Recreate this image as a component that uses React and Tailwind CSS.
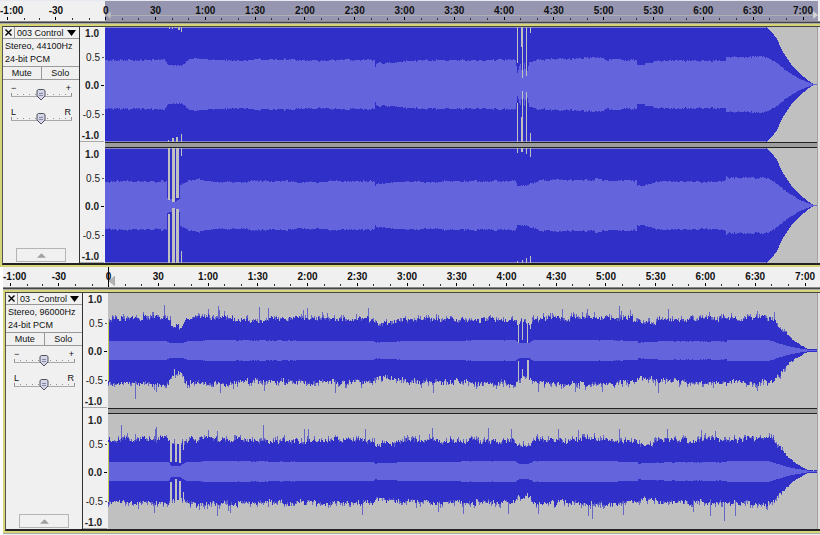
import React, { useState } from "react";

const LABELS = [
  "-30", "0", "30", "1:00", "1:30", "2:00", "2:30", "3:00",
  "3:30", "4:00", "4:30", "5:00", "5:30", "6:00", "6:30",
];

// channel drawing area, amplitude 1.0 is 57 units from the middle
const H = 115;
const MID = 57.5;

const random = (seed) => {
  let s = seed;
  return () => {
    s = (s * 16807) % 2147483647;
    return s / 2147483647;
  };
};

const envelope = (points, x) => {
  for (let i = 1; i < points.length; i++) {
    const [x0, a0] = points[i - 1];
    const [x1, a1] = points[i];
    if (x <= x1) return a0 + ((a1 - a0) * (x - x0)) / (x1 - x0);
  }
  return points[points.length - 1][1];
};

// one column per unit, closed shape above and below the middle line
const area = (top, bottom) => {
  let d = `M0 ${MID}`;
  top.forEach((a, x) => {
    d += `V${Math.round(MID - a * 57 - 0.5)}H${x + 1}`;
  });
  for (let x = bottom.length - 1; x >= 0; x--) {
    d += `V${Math.round(MID + bottom[x] * 57 + 0.5)}H${x}`;
  }
  return d + "Z";
};

// a slow wobble held for a few columns plus a fast one
const noisy = (points, width, amount, next) => {
  let slow = 0;
  let left = 0;
  return Array.from({ length: width }, (_, x) => {
    if (left-- <= 0) {
      slow = next() - 0.5;
      left = 1 + Math.floor(next() * 4);
    }
    const a = envelope(points, x);
    const n = slow * 0.6 + (next() - 0.5) * 0.6;
    return Math.max(0, a + n * amount * Math.min(1, a * 2));
  });
};

const spiky = (values, spikes, next) => {
  const out = values.map((a) => {
    const r = next();
    if (a < 0.3) return a;
    if (r > 0.95) return a + 0.05 + next() * 0.05;
    return r > 0.5 ? a + next() * 0.06 : a;
  });
  spikes.forEach(([x, a]) => {
    out[x] = a;
  });
  return out;
};

const LOUD_PEAK = [
  [0, 1], [661, 1], [666, 0.92], [671, 0.8], [678, 0.55], [685, 0.36],
  [695, 0.17], [703, 0.06], [708, 0], [712, 0],
];

const LOUD_RMS_TAIL = [
  [662, 0.48], [670, 0.39], [678, 0.28], [685, 0.19], [695, 0.08], [708, 0], [712, 0],
];

const QUIET_TAIL = [
  [527, 0.54], [533, 0.46], [545, 0.47], [552, 0.53], [600, 0.54],
  [662, 0.56], [666, 0.53], [675, 0.35], [682, 0.23], [689, 0.13], [698, 0.04], [702, 0.01], [710, 0.01],
];

const QUIET_RMS_TAIL = [
  [374, 0.17], [408, 0.17], [412, 0.12], [422, 0.13], [426, 0.17], [500, 0.17],
  [530, 0.16], [531, 0.13], [546, 0.14], [550, 0.15], [619, 0.15], [620, 0.17],
  [662, 0.17], [680, 0.07], [698, 0.01], [710, 0],
];

const TRACKS = [
  {
    name: "003 Control",
    rate: "Stereo, 44100Hz",
    width: 712,
    channels: [
      {
        seed: 17,
        peak: LOUD_PEAK,
        rms: [
          [0, 0.42], [60, 0.42], [63, 0.34], [76, 0.33], [83, 0.44], [95, 0.45],
          [110, 0.42], [135, 0.4], [148, 0.43], [185, 0.43], [195, 0.4], [235, 0.42],
          [269, 0.42], [270, 0.28], [271, 0.36], [285, 0.38], [305, 0.41], [410, 0.42],
          [412, 0.2], [415, 0.36], [417, 0.1], [419, 0.36], [421, 0.15], [424, 0.38],
          [435, 0.43], [495, 0.46], [499, 0.43], [531, 0.42], [532, 0.33], [548, 0.38],
          [550, 0.41], [620, 0.4], [621, 0.47], ...LOUD_RMS_TAIL,
        ],
        // x, width, y, height
        gaps: [
          [412, 1, 0, 36], [412, 1, 76, 39], [416, 1, 0, 20], [417, 1, 0, 51],
          [416, 1, 90, 25], [417, 1, 64, 51],
          [421, 1, 0, 49], [421, 1, 65, 50], [425, 1, 0, 6], [425, 1, 106, 9],
          [64, 1, 0, 2], [67, 1, 0, 2], [70, 2, 0, 1], [73, 2, 0, 3], [76, 1, 0, 5],
          [63, 1, 113, 2], [67, 2, 111, 4], [71, 2, 110, 5], [76, 1, 107, 8],
        ],
      },
      {
        seed: 91,
        peak: LOUD_PEAK,
        rms: [
          [0, 0.41], [61, 0.41], [62, 0.12], [66, 0.1], [70, 0.06], [74, 0.1],
          [75, 0.34], [82, 0.42], [95, 0.45], [110, 0.41], [135, 0.39], [148, 0.42],
          [185, 0.42], [195, 0.39], [235, 0.42], [269, 0.42], [270, 0.33], [271, 0.37],
          [305, 0.41], [410, 0.42], [412, 0.32], [424, 0.37], [435, 0.43], [495, 0.45],
          [499, 0.43], [531, 0.43], [532, 0.33], [548, 0.38], [550, 0.41], [620, 0.41],
          [621, 0.48], ...LOUD_RMS_TAIL,
        ],
        gaps: [
          [63, 2, 0, 52], [67, 3, 0, 54], [71, 3, 0, 50], [76, 1, 0, 8],
          [63, 2, 66, 49], [67, 3, 60, 55], [71, 3, 61, 54], [76, 1, 103, 12],
          [412, 1, 0, 5], [416, 2, 0, 4], [421, 1, 0, 6], [425, 1, 0, 9],
          [412, 1, 113, 2], [417, 1, 112, 3], [421, 1, 110, 5], [425, 1, 108, 7],
        ],
      },
    ],
  },
  {
    name: "03 - Control",
    rate: "Stereo, 96000Hz",
    width: 710,
    quiet: true,
    channels: [
      {
        seed: 233,
        peak: [
          [0, 0.56], [59, 0.58], [64, 0.42], [72, 0.4], [80, 0.56], [100, 0.57],
          [125, 0.56], [140, 0.52], [185, 0.55], [265, 0.54], [267, 0.46], [285, 0.48], [300, 0.53],
          [408, 0.55], [411, 0.48], [422, 0.48], [426, 0.54], [495, 0.58], ...QUIET_TAIL,
        ],
        spikesTop: [
          [56, 0.79], [100, 0.72], [110, 0.78], [111, 0.7], [151, 0.76], [160, 0.73], [195, 0.71],
          [199, 0.74], [260, 0.73], [455, 0.72], [480, 0.72], [512, 0.77], [523, 0.71],
          [561, 0.72], [602, 0.66], [650, 0.68], [667, 0.66],
        ],
        spikesBottom: [
          [27, 0.84], [48, 0.72], [112, 0.74], [156, 0.71], [227, 0.73], [325, 0.73],
          [431, 0.72], [468, 0.72], [495, 0.72], [551, 0.74], [650, 0.71],
        ],
        rms: [
          [0, 0.16], [58, 0.16], [62, 0.12], [74, 0.12], [80, 0.16], [100, 0.17],
          [265, 0.16], [267, 0.13], [290, 0.15], ...QUIET_RMS_TAIL,
        ],
        gaps: [
          [411, 1, 0, 50], [415, 1, 0, 47], [420, 1, 0, 50], [423, 1, 0, 36],
          [411, 1, 68, 47], [415, 1, 76, 39], [420, 2, 67, 48], [423, 1, 85, 30],
          [62, 2, 86, 29], [66, 1, 76, 39], [70, 1, 78, 37], [72, 1, 80, 35],
        ],
      },
      {
        seed: 577,
        peak: [
          [0, 0.54], [59, 0.56], [64, 0.5], [73, 0.48], [80, 0.56], [100, 0.57],
          [125, 0.56], [140, 0.52], [185, 0.53], [265, 0.54], [267, 0.47], [285, 0.48], [300, 0.53],
          [408, 0.53], [411, 0.44], [422, 0.44], [426, 0.53], [495, 0.56], ...QUIET_TAIL,
        ],
        spikesTop: [
          [13, 0.8], [47, 0.74], [48, 0.78], [109, 0.7], [155, 0.81], [196, 0.73], [200, 0.73],
          [257, 0.74], [324, 0.75], [381, 0.76], [404, 0.73], [451, 0.73], [471, 0.72],
          [512, 0.74], [560, 0.74], [594, 0.72], [608, 0.7],
        ],
        spikesBottom: [
          [46, 0.72], [109, 0.78], [122, 0.72], [254, 0.75], [330, 0.71], [356, 0.73], [401, 0.73],
          [431, 0.74], [481, 0.78], [485, 0.82], [516, 0.75], [586, 0.7], [603, 0.77],
          [617, 0.86], [628, 0.77],
        ],
        rms: [
          [0, 0.16], [60, 0.16], [63, 0.09], [72, 0.09], [77, 0.15], [100, 0.17],
          [265, 0.16], [267, 0.13], [290, 0.15], ...QUIET_RMS_TAIL,
        ],
        gaps: [
          [62, 2, 0, 48], [67, 2, 0, 48], [71, 2, 0, 49], [75, 1, 0, 36],
          [62, 2, 68, 47], [67, 2, 65, 50], [71, 2, 67, 48], [75, 1, 78, 37],
          [411, 1, 81, 34], [415, 1, 85, 30], [420, 1, 79, 36], [423, 1, 84, 31],
        ],
      },
    ],
  },
];

const Waveform = ({ channel, width, quiet }) => {
  const next = random(channel.seed);
  const rms = noisy(channel.rms, width, quiet ? 0.02 : 0.05, next);
  const top = noisy(channel.peak, width, quiet ? 0.12 : 0, next);
  const bottom = noisy(channel.peak, width, quiet ? 0.12 : 0, next);

  return (
    <svg
      viewBox={`0 0 ${width} ${H}`}
      preserveAspectRatio="none"
      shapeRendering="crispEdges"
      className="block h-[115px] w-full bg-[#c0c0c0]"
    >
      {quiet && (
        <path
          d={area(spiky(top, channel.spikesTop, next), spiky(bottom, channel.spikesBottom, next))}
          fill="#6666c6"
        />
      )}
      <path d={area(top, bottom)} fill="#3030c8" />
      {!quiet && <path d="M0 0H661V1H0ZM0 114H661V115H0Z" fill="#8484cc" />}
      <path d={area(rms, rms)} fill="#6464dc" />
      {channel.gaps.map(([x, w, y, h]) => (
        <rect key={`${x}-${y}`} x={x} y={y} width={w} height={h} fill="#c0c0c0" />
      ))}
      {quiet && <rect x="0" y="28" width="1" height="60" fill="#c8c850" />}
    </svg>
  );
};

const Ticks = () => (
  <div className="flex h-[3px] items-end justify-around">
    <span className="h-[2px] w-px bg-[#333]" />
    <span className="h-[3px] w-px bg-black" />
    <span className="h-[2px] w-px bg-[#333]" />
  </div>
);

const TimeRuler = ({ selected }) => (
  <div
    className={
      selected
        ? "relative flex h-[21px] border-t border-[#e8e8f0] bg-[linear-gradient(to_right,#f0f0f0_105px,#9696b0_105px,#9696b0_calc(100%_-_2px),#f0f0f0_calc(100%_-_2px))] pr-[2px]"
        : "relative flex h-5 bg-[#f0f0f0]"
    }
  >
    {selected && (
      <div className="absolute top-[14px] right-[2px] left-[105px] h-px bg-[#b0b0b4]" />
    )}
    <svg
      viewBox="0 0 6 10"
      className={selected ? "absolute top-[10px] left-[106px] h-2 w-[5px]" : "absolute top-[9px] left-[106px] h-[10px] w-[6px]"}
    >
      <path d="M6 0V10L0 5Z" fill={selected ? "#c0c0c4" : "#b4b4b4"} stroke="#999" strokeWidth="0.6" />
    </svg>
    {selected ? (
      <svg viewBox="0 0 6 10" className="absolute top-[10px] right-[2px] h-2 w-[5px]">
        <path d="M0 0V10L6 5Z" fill="#d4d4d4" />
      </svg>
    ) : (
      <div className="absolute inset-y-0 left-[105px] w-px bg-black" />
    )}

    <div className="relative w-[31px] shrink-0">
      <div className="h-4 text-[10px] leading-5 font-bold">-1:00</div>
      <div className="flex h-[3px] items-end gap-4 pl-[7px]">
        <span className="h-[3px] w-px bg-black" />
        <span className="h-[2px] w-px bg-[#333]" />
      </div>
    </div>
    {LABELS.map((label) => (
      <div key={label} className="relative min-w-0 flex-1">
        <div className="h-4 text-center text-[10px] leading-5 font-bold">{label}</div>
        <Ticks />
      </div>
    ))}
    <div className="relative w-10 shrink-0">
      <div className="h-4 pl-[15px] text-[10px] leading-5 font-bold">7:00</div>
      <div className="flex h-[3px] items-end gap-4 pl-2">
        <span className="h-[2px] w-px bg-[#333]" />
        <span className="h-[3px] w-px bg-black" />
      </div>
    </div>
  </div>
);

const Slider = ({ label, left, right }) => {
  const [value, setValue] = useState(50);

  return (
    <label className="relative block h-6 px-2 text-[9px] leading-[8px]">
      <span className="flex justify-between">
        <span>{left}</span>
        <span>{right}</span>
      </span>
      <svg viewBox="0 0 62 13" shapeRendering="crispEdges" className="absolute top-1 left-2 h-[13px] w-[62px]">
        {Array.from({ length: 11 }, (_, i) => (
          <rect key={i} x={i * 6} y={i % 10 === 0 ? 5 : 6} width="1" height={i % 10 === 0 ? 3 : 1} fill="#909090" />
        ))}
        <rect x="0" y="8" width="61" height="1" fill="#a8a8a8" />
        <g transform={`translate(${5 + value / 2} 0)`} shapeRendering="auto">
          <path d="M-4 2.5L-2.5 1.5H2.5L4 2.5V8L0 12L-4 8Z" fill="#d4d4e8" stroke="#50505c" />
          <path d="M-2 5.5H2M-2 7.5H2" stroke="#8888a0" />
        </g>
      </svg>
      <input
        type="range"
        aria-label={label}
        value={value}
        onChange={(e) => setValue(Number(e.target.value))}
        className="absolute top-1 left-2 h-[13px] w-[62px] opacity-0"
      />
    </label>
  );
};

const ControlPanel = ({ track }) => (
  <div className="flex w-[77px] shrink-0 flex-col border-r border-[#333] bg-[#f0f0f0] text-[9px] text-[#111]">
    <div className="flex h-3 border-b border-[#999]">
      <button aria-label="Close track" className="flex w-3 items-center justify-center border-r border-[#999]">
        <svg viewBox="0 0 7 7" className="h-[7px] w-[7px]">
          <path d="M0.5 0.5L6.5 6.5M6.5 0.5L0.5 6.5" stroke="#000" strokeWidth="1.4" />
        </svg>
      </button>
      <button className="flex min-w-0 flex-1 items-center justify-between pr-[3px] pl-[2px] leading-3 whitespace-nowrap">
        {track.name}
        <svg viewBox="0 0 10 6" className="h-[6px] w-[9px] shrink-0" preserveAspectRatio="none">
          <path d="M0 0H10L5 6Z" fill="#000" />
        </svg>
      </button>
    </div>
    <div className="h-[27px] pt-px pl-[2px] leading-[13px] whitespace-nowrap">
      <div>{track.rate}</div>
      <div>24-bit PCM</div>
    </div>
    <div className="flex h-[14px] border-y border-[#999]">
      <button className="flex-1 border-r border-[#999] leading-3">Mute</button>
      <button className="flex-1 leading-3">Solo</button>
    </div>
    <div className="pt-1">
      <Slider label="Gain" left="−" right="+" />
      <Slider label="Pan" left="L" right="R" />
    </div>
    <button
      aria-label="Collapse track"
      className="mt-auto mb-px flex h-[14px] w-[50px] items-center justify-center self-center border border-[#b4b4b4]"
    >
      <svg viewBox="0 0 10 5" className="h-[5px] w-[9px]">
        <path d="M0 5H10L5 0Z" fill="#a0a0a0" />
      </svg>
    </button>
  </div>
);

const LevelRuler = () => (
  <div className="flex h-[115px] flex-col border-b border-[#aaa] pt-px text-[10px] text-[#222]">
    <div className="h-3 pr-[5px] text-right leading-3 font-bold">1.0</div>
    <div className="flex h-[34px] items-center justify-end gap-[2px]">
      0.5<span className="h-px w-[2px] bg-[#555]" />
    </div>
    <div className="flex h-[23px] items-center justify-end gap-[2px] font-bold">
      0.0<span className="h-px w-[3px] bg-black" />
    </div>
    <div className="flex h-[34px] items-center justify-end gap-[2px]">
      -0.5<span className="h-px w-[2px] bg-[#555]" />
    </div>
    <div className="h-[10px] pr-[5px] text-right leading-[10px] font-bold">-1.0</div>
  </div>
);

const Track = ({ track }) => (
  <div className="border-y-2 border-l-2 border-[#d6d678]">
    <div className="flex border-t border-b-2 border-l border-t-[#444] border-b-[#222] border-l-[#555]">
      <ControlPanel track={track} />
      <div className="flex w-[25px] shrink-0 flex-col justify-between bg-[#f0f0f0] pr-px">
        <LevelRuler />
        <LevelRuler />
      </div>
      <div className="min-w-0 flex-1 border-r border-[#a0a0a0]">
        <Waveform channel={track.channels[0]} width={track.width} quiet={track.quiet} />
        <div className="h-[6px] border-y border-[#222] bg-[#9c9c9c]" />
        <Waveform channel={track.channels[1]} width={track.width} quiet={track.quiet} />
      </div>
      <div className="w-[2px] bg-[#e0e0e0]" />
    </div>
  </div>
);

const Project = ({ track, selected }) => (
  <section>
    <TimeRuler selected={selected} />
    <div className="h-[3px] border-t border-b border-t-[#888] border-b-[#aaa] bg-[#444]" />
    <Track track={track} />
  </section>
);

const App = () => (
  <main className="bg-white font-['Liberation_Sans',Arial,sans-serif] text-[#111]">
    <Project track={TRACKS[0]} selected />
    <div className="pl-[3px]">
      <Project track={TRACKS[1]} />
      <div className="h-px bg-[#aaa]" />
      <div className="h-px bg-[#eee]" />
    </div>
  </main>
);

export default App;
